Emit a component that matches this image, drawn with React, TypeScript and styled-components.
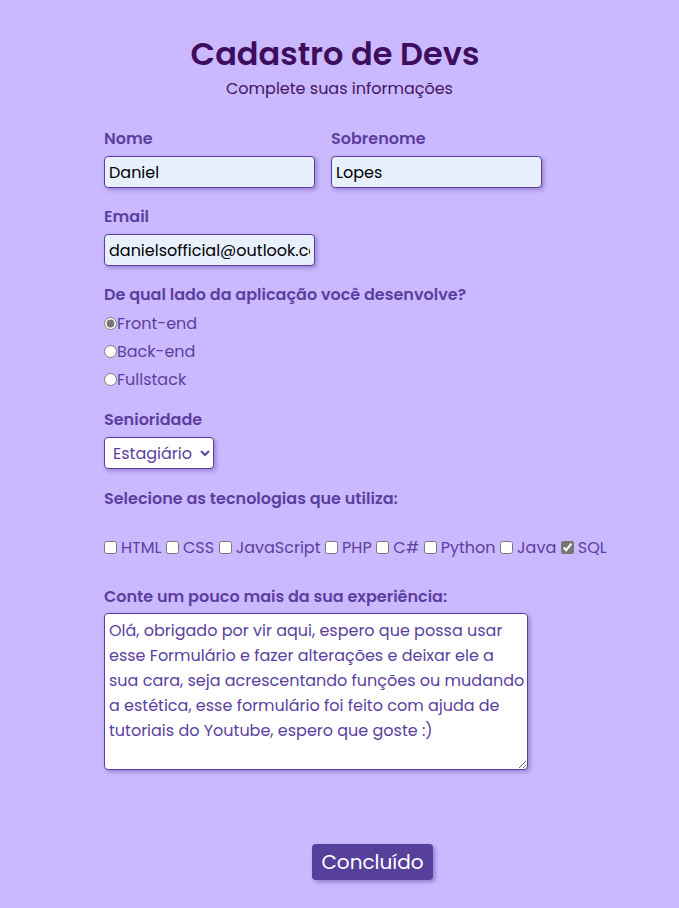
import React from "react";
import styled, { createGlobalStyle } from "styled-components";

const Global = createGlobalStyle`
  html, body { margin: 0; padding: 0; background: #cbb9ff; }
  body { font-family: "Poppins", "Open Sans", "DejaVu Sans", sans-serif; }
  * { box-sizing: border-box; }
`;

const Page = styled.div`
  width: 679px;
  min-height: 908px;
  background: #cbb9ff;
  padding-top: 32px;
`;

const Header = styled.header`
  text-align: center;
`;

const Title = styled.h1`
  margin: 0;
  padding-right: 9px;
  font-size: 32px;
  line-height: 44px;
  font-weight: 600;
  color: #3f0d5e;
`;

const Subtitle = styled.p`
  margin: 1px 0 0;
  font-size: 16px;
  line-height: 24px;
  color: #3f1663;
`;

const Form = styled.form`
  width: 537px;
  margin: 26px 0 0 104px;
  display: flex;
  flex-direction: column;
`;

const Row = styled.div`
  display: flex;
  gap: 16px;
`;

const Field = styled.div<{ $mt?: number }>`
  display: flex;
  flex-direction: column;
  margin-top: ${(p) => p.$mt ?? 0}px;
`;

const Label = styled.label<{ $mb?: number }>`
  font-size: 16px;
  line-height: 24px;
  font-weight: 600;
  color: #5b3fa0;
  margin-bottom: ${(p) => p.$mb ?? 5}px;
`;

const TextInput = styled.input`
  width: 211px;
  height: 32px;
  padding: 0 4px;
  font: inherit;
  font-size: 16px;
  color: #000;
  background: #e8f0fe;
  border: 1px solid #5a3f9e;
  border-radius: 4px;
  box-shadow: 2px 2px 4px rgba(60, 30, 120, 0.35);
  outline: none;
`;

const RadioRow = styled.label`
  display: flex;
  align-items: center;
  height: 28px;
  font-size: 16px;
  color: #5b3fa0;
  input {
    margin: 0;
    width: 13px;
    height: 13px;
    accent-color: #767676;
  }
`;

const Select = styled.select`
  width: 110px;
  height: 32px;
  font: inherit;
  font-size: 16px;
  color: #5b3fa0;
  background: #fff;
  border: 1px solid #5a3f9e;
  border-radius: 4px;
  padding: 0 4px;
  box-shadow: 2px 2px 4px rgba(60, 30, 120, 0.35);
`;

const Checks = styled.div`
  display: flex;
  align-items: center;
  height: 24px;
  margin-top: 19px;
  white-space: nowrap;
  font-size: 16px;
  color: #5b3fa0;
`;

const Check = styled.label`
  display: inline-flex;
  align-items: center;
  margin-right: 4.6px;
  input {
    margin: 0 4px 0 0;
    width: 13px;
    height: 13px;
    accent-color: #767676;
  }
`;

const TextArea = styled.textarea`
  width: 424px;
  height: 157px;
  font: inherit;
  font-size: 16px;
  line-height: 25px;
  color: #5b3fa0;
  background: #fff;
  border: 1px solid #5a3f9e;
  border-radius: 4px;
  padding: 4px 0 4px 4px;
  box-shadow: 2px 2px 4px rgba(60, 30, 120, 0.35);
  resize: both;
`;

const Footer = styled.div`
  display: flex;
  justify-content: center;
  width: 537px;
  margin: 74px 0 0 104px;
`;

const Button = styled.button`
  width: 121px;
  height: 36px;
  font: inherit;
  font-size: 20px;
  color: #fff;
  background: #56409b;
  border: none;
  border-radius: 4px;
  box-shadow: 2px 2px 4px rgba(60, 30, 120, 0.4);
`;

const techs = ["HTML", "CSS", "JavaScript", "PHP", "C#", "Python", "Java", "SQL"];

export default function App() {
  return (
    <Page>
      <Global />
      <Header>
        <Title>Cadastro de Devs</Title>
        <Subtitle>Complete suas informações</Subtitle>
      </Header>
      <Form onSubmit={(e) => e.preventDefault()}>
        <Row>
          <Field>
            <Label>Nome</Label>
            <TextInput defaultValue="Daniel" />
          </Field>
          <Field>
            <Label>Sobrenome</Label>
            <TextInput defaultValue="Lopes" />
          </Field>
        </Row>
        <Field $mt={17}>
          <Label>Email</Label>
          <TextInput defaultValue="danielsofficial@outlook.com" />
        </Field>
        <Field $mt={17}>
          <Label $mb={2}>De qual lado da aplicação você desenvolve?</Label>
          <RadioRow><input type="radio" name="lado" defaultChecked />Front-end</RadioRow>
          <RadioRow><input type="radio" name="lado" />Back-end</RadioRow>
          <RadioRow><input type="radio" name="lado" />Fullstack</RadioRow>
        </Field>
        <Field $mt={15}>
          <Label>Senioridade</Label>
          <Select defaultValue="Estagiário">
            <option>Estagiário</option>
            <option>Júnior</option>
            <option>Pleno</option>
            <option>Sênior</option>
          </Select>
        </Field>
        <Field $mt={18}>
          <Label>Selecione as tecnologias que utiliza:</Label>
          <Checks>
            {techs.map((t) => (
              <Check key={t}>
                <input type="checkbox" defaultChecked={t === "SQL"} />
                {t}
              </Check>
            ))}
          </Checks>
        </Field>
        <Field $mt={26}>
          <Label $mb={4}>Conte um pouco mais da sua experiência:</Label>
          <TextArea defaultValue="Olá, obrigado por vir aqui, espero que possa usar esse Formulário e fazer alterações e deixar ele a sua cara, seja acrescentando funções ou mudando a estética, esse formulário foi feito com ajuda de tutoriais do Youtube, espero que goste :)" />
        </Field>
      </Form>
      <Footer>
        <Button type="button">Concluído</Button>
      </Footer>
    </Page>
  );
}
